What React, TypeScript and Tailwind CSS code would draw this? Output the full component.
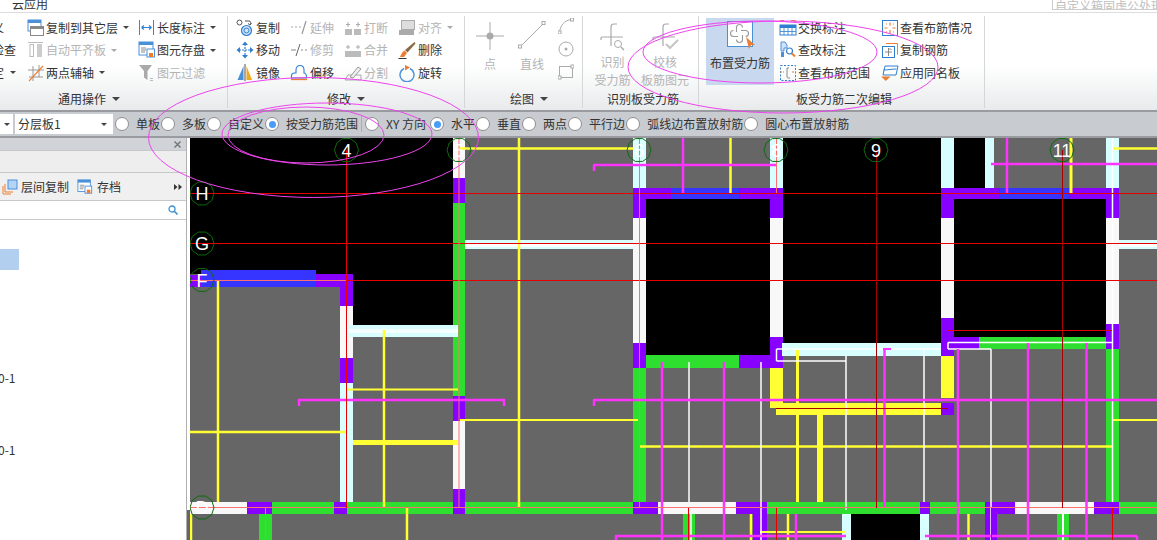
import React from 'react';

const GREEN = '#2fdf2f';
const PURPLE = '#8800ff';
const BLUE = '#3535ff';
const WHITE = '#f8f8f8';
const CYAN = '#d8ffff';
const YELLOW = '#ffff33';
const MAGENTA = '#ff33ff';
const RED = '#e80000';
const DARKRED = '#a80000';
const SALMON = '#ff7070';

type R = [number, number, number, number, string];
type L = [number, number, number, number, string, number];

const fills: R[] = [
  // black openings
  [190, 138, 453, 274, '#000'], [353, 274, 453, 325, '#000'],
  [645, 199, 770, 355, '#000'], [782, 138, 941, 343, '#000'],
  [954, 138, 985, 188, '#000'], [954, 199, 1106, 337, '#000'],
  [851, 514, 920, 540, '#000'],
  // wall 4
  [340, 274, 353, 306, PURPLE], [340, 306, 353, 358, WHITE], [340, 358, 353, 383, PURPLE], [340, 383, 353, 502, CYAN],
  // wall 5
  [453, 138, 465, 178, WHITE], [453, 178, 465, 203, PURPLE], [453, 203, 465, 396, GREEN],
  [453, 396, 465, 421, PURPLE], [453, 421, 465, 489, WHITE], [453, 489, 465, 514, PURPLE],
  // wall 6
  [633, 138, 646, 188, CYAN], [633, 188, 646, 218, PURPLE], [633, 218, 646, 343, WHITE], [633, 343, 646, 368, PURPLE], [633, 368, 646, 502, GREEN],
  // wall 8
  [770, 138, 783, 188, CYAN], [770, 188, 783, 218, PURPLE], [770, 218, 783, 337, WHITE], [770, 337, 783, 368, PURPLE],
  [770, 368, 783, 398, YELLOW], [770, 398, 783, 408, YELLOW],
  // wall 10
  [941, 138, 954, 188, CYAN], [941, 188, 954, 218, PURPLE], [941, 218, 954, 318, WHITE], [941, 318, 954, 356, PURPLE],
  [941, 356, 954, 398, YELLOW], [941, 403, 954, 415, PURPLE],
  // wall 11 + 12
  [985, 138, 994, 188, CYAN],
  [1106, 138, 1119, 188, CYAN], [1106, 188, 1119, 218, PURPLE], [1106, 218, 1119, 324, WHITE], [1106, 324, 1119, 349, PURPLE], [1106, 349, 1119, 502, GREEN],
  // top beams
  [190, 275, 201, 287, PURPLE], [201, 270, 316, 287, BLUE], [316, 274, 353, 287, PURPLE],
  [633, 188, 671, 199, PURPLE], [671, 188, 739, 199, BLUE], [739, 188, 783, 199, PURPLE],
  [941, 188, 1000, 199, PURPLE], [1000, 188, 1069, 199, BLUE], [1069, 188, 1119, 199, PURPLE],
  // cross beams
  [465, 240, 633, 249, CYAN], [465, 244, 633, 247, '#ffffff'],
  [1119, 240, 1157, 249, CYAN], [1119, 244, 1157, 247, '#ffffff'],
  [348, 325, 458, 337, CYAN], [348, 329, 458, 333, '#f4ffff'],
  [782, 343, 941, 356, CYAN],
  [646, 355, 739, 368, GREEN], [739, 355, 770, 368, PURPLE],
  [941, 337, 979, 349, PURPLE], [979, 337, 1106, 349, GREEN],
  [776, 403, 941, 415, YELLOW],
  [817, 415, 823, 502, YELLOW],
  [353, 440, 458, 445, YELLOW],
  // bottom beam
  [190, 502, 247, 514, WHITE], [247, 502, 272, 514, PURPLE], [272, 502, 334, 514, GREEN], [334, 502, 347, 514, PURPLE],
  [347, 502, 453, 514, GREEN], [453, 502, 465, 514, PURPLE], [465, 502, 633, 514, GREEN],
  [633, 502, 658, 514, PURPLE], [658, 502, 736, 514, WHITE], [736, 502, 767, 514, PURPLE], [767, 502, 920, 514, GREEN],
  [920, 502, 930, 514, PURPLE], [930, 502, 985, 514, GREEN], [985, 502, 1015, 514, PURPLE], [1015, 502, 1094, 514, WHITE],
  [1094, 502, 1119, 514, PURPLE], [1119, 502, 1157, 514, GREEN],
  // lower walls
  [259, 514, 272, 540, GREEN], [683, 514, 695, 540, GREEN], [753, 514, 767, 540, PURPLE],
  [842, 514, 851, 540, CYAN], [920, 514, 929, 540, CYAN], [985, 514, 997, 540, PURPLE], [997, 514, 1000, 540, '#666666'],
  [1057, 514, 1069, 540, GREEN],
];

const lines: L[] = [
  // yellow bars
  [218, 281, 218, 502, YELLOW, 2.5], [190, 432, 346, 432, YELLOW, 2.5], [384, 330, 384, 508, YELLOW, 2.5],
  [348, 389.5, 458, 389.5, YELLOW, 2], [519, 138, 519, 508, YELLOW, 2.5], [460, 148.5, 633, 148.5, YELLOW, 2.5],
  [460, 420, 638, 420, YELLOW, 2], [1113, 420, 1157, 420, YELLOW, 2], [1113, 148.5, 1157, 148.5, YELLOW, 2.5],
  [639, 446.5, 1112, 446.5, YELLOW, 2.5], [797.5, 350, 797.5, 502, YELLOW, 3], [730.5, 138, 730.5, 193, YELLOW, 2.5],
  [1071, 138, 1071, 193, YELLOW, 3], [191, 514, 191, 540, YELLOW, 2.5], [407, 508, 407, 540, YELLOW, 2.5],
  [751, 514, 751, 540, YELLOW, 2.5], [788, 514, 788, 540, YELLOW, 2.5], [968.5, 514, 968.5, 540, YELLOW, 2.5],
  [760, 532, 846, 532, YELLOW, 2],
  // white bars
  [689, 362, 689, 502, '#ffffff', 1.5], [761, 362, 761, 540, '#ffffff', 1.5], [846, 355, 846, 510, '#ffffff', 1.5],
  [924, 350, 924, 502, '#ffffff', 1.5], [991, 349, 991, 540, '#ffffff', 1.5], [1112.5, 138, 1112.5, 502, '#ffffff', 1.5],
  [776.5, 349, 941, 349, '#ffffff', 1.5], [776.5, 349, 776.5, 361, '#ffffff', 1.5], [776.5, 361, 846, 361, '#ffffff', 1.5],
  [948, 342.5, 1112, 342.5, '#ffffff', 1.5], [948, 342.5, 948, 349, '#ffffff', 1.5], [948, 349, 991, 349, '#ffffff', 1.5],
  [691, 514, 691, 540, '#ffffff', 1.5], [1063, 514, 1063, 540, '#ffffff', 2],
  // magenta bars
  [298, 400, 505, 400, MAGENTA, 2.5], [299, 400, 299, 406, MAGENTA, 2.5], [504, 400, 504, 406, MAGENTA, 2.5],
  [593, 400, 1157, 400, MAGENTA, 2.5], [594, 400, 594, 406, MAGENTA, 2.5],
  [593, 165, 776, 165, MAGENTA, 2.5], [594, 165, 594, 171, MAGENTA, 2.5], [683, 138, 683, 193, MAGENTA, 2.5],
  [991, 164, 1157, 164, MAGENTA, 2.5], [1007, 138, 1007, 193, MAGENTA, 2.5],
  [662, 362, 662, 540, MAGENTA, 2.5], [724, 362, 724, 540, MAGENTA, 2.5], [884.5, 349, 884.5, 508, MAGENTA, 2.5],
  [883, 349, 891, 349, MAGENTA, 2],
  [958, 349, 958, 540, MAGENTA, 2.5], [1028, 343, 1028, 540, MAGENTA, 2.5], [1086.5, 343, 1086.5, 540, MAGENTA, 2.5],
  [796, 514, 796, 540, MAGENTA, 2.5], [615, 536, 846, 536, MAGENTA, 2.5], [616, 536, 616, 540, MAGENTA, 2.5],
  [925, 536, 1137, 536, MAGENTA, 2.5], [1137, 536, 1137, 540, MAGENTA, 2.5],
  // axes
  [190, 193.5, 1157, 193.5, RED, 1], [190, 243.5, 1157, 243.5, RED, 1], [190, 280.5, 1157, 280.5, RED, 1],
  [190, 280.5, 346, 280.5, SALMON, 1], [190, 507.5, 1157, 507.5, SALMON, 1],
  [346.5, 150, 346.5, 508, RED, 1], [459, 138, 459, 508, SALMON, 1], [639.5, 138, 639.5, 508, SALMON, 1],
  [776.5, 138, 776.5, 193, SALMON, 1], [876.5, 150, 876.5, 508, DARKRED, 1], [1062.5, 150, 1062.5, 508, DARKRED, 1],
  [265.5, 508, 265.5, 540, SALMON, 1], [688.5, 508, 688.5, 540, RED, 1], [776.5, 508, 776.5, 540, RED, 1],
  [991.5, 508, 991.5, 540, RED, 1], [1112.5, 508, 1112.5, 540, RED, 1],
  [948, 330.5, 1112, 330.5, RED, 1], [776, 408.5, 948, 408.5, DARKRED, 1],
];

const axisMarks: [number, number, string][] = [
  [346.5, 150, '4'], [459, 150, '5'], [639, 150, '6'], [776, 150, '8'], [876, 150, '9'], [1062, 150, '11'],
  [202, 193.5, 'H'], [202, 243.5, 'G'], [202, 280, 'F'], [202, 507.5, 'D'],
];

function decagon(cx: number, cy: number, r: number) {
  const pts: string[] = [];
  for (let i = 0; i < 10; i++) {
    const a = (Math.PI * 2 * i) / 10;
    pts.push(`${cx + r * Math.cos(a)},${cy + r * Math.sin(a)}`);
  }
  return pts.join(' ');
}

function Canvas() {
  return (
    <svg width={967} height={402} viewBox="190 138 967 402" className="block bg-[#666666]">
      {fills.map((f, i) => (
        <rect key={i} x={f[0]} y={f[1]} width={f[2] - f[0]} height={f[3] - f[1]} fill={f[4]} shapeRendering="crispEdges" />
      ))}
      {lines.map((l, i) => (
        <line key={i} x1={l[0]} y1={l[1]} x2={l[2]} y2={l[3]} stroke={l[4]} strokeWidth={l[5]} />
      ))}
      {axisMarks.map(([x, y, t]) => (
        <g key={t}>
          <polygon points={decagon(x, y, 12)} fill="none" stroke="#0b6b0b" strokeWidth={1} />
          <text x={x} y={y + 6.5} textAnchor="middle" fontSize={18} fill="#ffffff" fontFamily="'Liberation Sans', sans-serif">{t}</text>
        </g>
      ))}
    </svg>
  );
}

const S = ({ children, className }: { children: React.ReactNode; className?: string }) => (
  <svg viewBox="0 0 18 18" className={className ?? 'w-[18px] h-[18px] shrink-0'} fill="none">{children}</svg>
);

const icons: Record<string, React.ReactNode> = {
  copyLayer: <><rect x="1" y="1" width="13" height="11" fill="#fff" stroke="#4a90d9" /><rect x="1" y="1" width="13" height="3" fill="#4a90d9" /><rect x="3.5" y="7.5" width="13" height="9" fill="#fff" stroke="#888" /><rect x="3.5" y="7.5" width="13" height="2.5" fill="#888" /></>,
  autoAlign: <><rect x="3" y="3.5" width="3.5" height="12" stroke="#bbb" /><rect x="10" y="3" width="5" height="13" fill="#ccc" /><path d="M1 1.5h15" stroke="#bbb" /></>,
  twoPoint: <><path d="M6 2v15M12 1v12M1 6h16M2 13h14" stroke="#999" /><path d="M2 17L16 2" stroke="#ed7d31" strokeWidth="1.1" /></>,
  lengthDim: <><path d="M1.5 1v15M15.5 1v15" stroke="#777" /><path d="M3.5 8.5h10M3.5 8.5l2.5-2M3.5 8.5l2.5 2M13.5 8.5l-2.5-2M13.5 8.5l-2.5 2" stroke="#2f7fd0" strokeWidth="1.1" /></>,
  save: <><rect x="1" y="1" width="14" height="13" fill="#fff" stroke="#4a90d9" /><rect x="1" y="1" width="14" height="3" fill="#4a90d9" /><path d="M3 7h5M3 9h5M3 11h4" stroke="#888" /><rect x="9" y="8" width="7.5" height="8" fill="#fff" stroke="#4a90d9" /><rect x="11" y="12" width="4" height="4" fill="#ed7d31" /></>,
  filter: <><path d="M1 1h13L9.5 7v9L6 13.5V7z" fill="#aaa" /><path d="M12 14.5h3M12 16.5h3" stroke="#bbb" /></>,
  copy: <><circle cx="3.5" cy="3.5" r="2.5" stroke="#555" /><circle cx="10.5" cy="11.5" r="5" fill="#cfe2f7" stroke="#2f7fd0" strokeWidth="1.2" /><circle cx="10.5" cy="11.5" r="2.5" stroke="#2f7fd0" /><path d="M9 2h4c2 0 2 2 1 4M14 6l-2-1.5M14 6l1.5-2" stroke="#555" /></>,
  move: <><path d="M9 3v12M3 9h12" stroke="#2f7fd0" strokeWidth="1.2" strokeDasharray="2 1" /><path d="M9 0.5l3 3.5H6zM9 17.5l3-3.5H6zM0.5 9L4 6v6zM17.5 9L14 6v6z" fill="#2f7fd0" /></>,
  mirror: <><path d="M7.5 2v14H1.5z" fill="#4a90d9" /><path d="M10.5 2v14h5.5z" fill="#f0a81e" /><path d="M9 0v17" stroke="#555" /></>,
  extend: <><path d="M1 8h2M5 8h2M9 8h2" stroke="#aaa" /><path d="M12 15l4-13" stroke="#999" strokeWidth="1.2" /></>,
  trim: <><path d="M1 9h5M11 9h2M15 9h2" stroke="#888" /><path d="M6 15l4-12" stroke="#666" /></>,
  offset: <><path d="M1.5 14v-2c0-2 1-3 3-3h1.5V6c0-3 2-4.5 4-4.5s4 1.5 4 4.5v3c2 0 2.5 2 2.5 5z" fill="#fff" stroke="#2f7fd0" strokeWidth="1.1" /><path d="M1 15.5h16" stroke="#ed7d31" strokeWidth="1.3" /></>,
  breakIcon: <><rect x="1" y="10" width="7" height="6" fill="#bbb" /><rect x="10" y="10" width="7" height="6" fill="#bbb" /><path d="M4 3v5M14 3v5M2 5.5h4M12 5.5h4" stroke="#aaa" /></>,
  merge: <><rect x="1" y="10" width="16" height="6" fill="#bbb" /><path d="M4 4v4M14 4v4M2 6h4M12 6h4" stroke="#aaa" /></>,
  split: <><path d="M1 16l3-5h13v5z" stroke="#aaa" /><path d="M6 13l8-10 3 2-8 9z" fill="#eee" stroke="#999" /></>,
  alignIcon: <><rect x="3.5" y="1.5" width="13" height="9" fill="#ddd" stroke="#aaa" /><rect x="1" y="11" width="15" height="5" fill="#aaa" /></>,
  del: <><path d="M16.5 1l1 1.5-8 9-2.5-2.5z" fill="#8a6a45" /><path d="M6.5 9.5l2.5 2.5-3 4H2c1-2 2-5 4.5-6.5z" fill="#ed7d31" /><path d="M0.5 17.5h8" stroke="#333" /></>,
  rotate: <><path d="M6 4.5A7 7 0 1 0 12 4.5" stroke="#4a90d9" strokeWidth="1.4" /><path d="M7 1v5.5l5-3z" fill="#ed7d31" /></>,
  swapLabel: <><path d="M2 3V1.5h3M12 1.5h4V3" stroke="#ed7d31" strokeWidth="1.2" /><rect x="1" y="6" width="16" height="10" fill="#fff" stroke="#2f7fd0" /><rect x="1" y="6" width="16" height="3" fill="#2f7fd0" /><path d="M1 12.5h16M5 9v7M9 9v7M13 9v7" stroke="#2f7fd0" strokeWidth="0.8" /></>,
  checkLabel: <><path d="M2 1h4l2 3v3H5v3H2z" fill="#cfe2f7" stroke="#4a90d9" /><path d="M2 11h3v5H2z" fill="#4a90d9" /><circle cx="10.5" cy="10" r="3" fill="#fff" stroke="#2f7fd0" strokeWidth="1.2" /><path d="M13 12.5l3 3" stroke="#ed7d31" strokeWidth="2" /></>,
  viewRange: <><rect x="1.5" y="1.5" width="15" height="15" stroke="#2f7fd0" strokeDasharray="2 1.5" /><path d="M1 8h4M13 8h4" stroke="#ed7d31" strokeDasharray="2 1" /><path d="M8 4v9c0 1 1 1 3 1M8 4h2" stroke="#888" /></>,
  viewInfo: <><rect x="1.5" y="1.5" width="15" height="15" stroke="#2f7fd0" /><path d="M9 3.5v3M9 11v3.5M3.5 9h3M11.5 9h3" stroke="#ed7d31" strokeWidth="1.2" /><path d="M5 5h1M12 5h1M5 13h1M12 13h1" stroke="#ed7d31" /></>,
  copyBar: <><rect x="1.5" y="5.5" width="12" height="11" fill="#fff" stroke="#2f7fd0" /><path d="M5 2.5h11.5v11" stroke="#ed7d31" /><path d="M7.5 7v8M4 11h7M10.5 9c0-1-1-1-3-1" stroke="#888" /></>,
  sameName: <><path d="M4 2h13l-2 9H2z" fill="#fff" stroke="#2f7fd0" /><path d="M2.5 6c5 0 8-1 13-1" stroke="#2f7fd0" /><path d="M0 12.5h9.5L4.8 17z" fill="#ed7d31" /></>,
};

function Caret({ muted, big }: { muted?: boolean; big?: boolean }) {
  return <span className={`inline-block w-0 h-0 ${big ? 'border-x-[4px] border-t-[4px]' : 'border-x-[3px] border-t-[3px]'} border-x-transparent ${muted ? 'border-t-[#aaaaaa]' : 'border-t-[#444444]'}`} />;
}

function Item({ icon, text, off, caret, iconGap = 2 }: { icon: string; text: string; off?: boolean; caret?: boolean; iconGap?: number }) {
  return (
    <div className={`flex items-center h-[23px] even:h-[22px] whitespace-nowrap ${off ? 'text-[#b4b4b4]' : 'text-[#333333]'}`}>
      <S>{icons[icon]}</S>
      <span style={{ marginLeft: iconGap }}>{text}</span>
      {caret && <span className="ml-[5px] flex items-center"><Caret muted={off} /></span>}
    </div>
  );
}

function Group({ width, label, caret, labelPad, children }: { width: number; label: string; caret?: boolean; labelPad: number; children: React.ReactNode }) {
  return (
    <div className="relative shrink-0 h-[92px] flex flex-col border-r border-[#d4d6d8]" style={{ width }}>
      <div className="h-[73px] flex">{children}</div>
      <div className="flex items-center gap-[6px] text-[#333333] h-[19px]" style={{ paddingLeft: labelPad }}>
        <span>{label}</span>
        {caret && <Caret big />}
      </div>
    </div>
  );
}

function Big({ icon, lines, off, width }: { icon: React.ReactNode; lines: string[]; off?: boolean; width: number }) {
  return (
    <div className={`flex flex-col items-center shrink-0 ${off ? 'text-[#b4b4b4]' : 'text-[#333333]'}`} style={{ width }}>
      <div className="h-[39px] pt-[5px] flex justify-center">{icon}</div>
      {lines.map((l) => <div key={l} className="h-[18px] leading-[18px] whitespace-nowrap">{l}</div>)}
    </div>
  );
}

function RebarIcon() {
  return (
    <svg width={30} height={30} viewBox="0 0 30 30" fill="none">
      <path d="M13 25V6q0-3 3-3h3M3 19v-2q0-1 1-1h21" stroke="#aaaaaa" strokeWidth="1.2" />
    </svg>
  );
}

function Ribbon() {
  return (
    <div className="h-[97px] flex pt-[3px] bg-gradient-to-b from-white from-55% to-[#e8eaeb] text-[12px]">
      <Group width={228} label="通用操作" caret labelPad={58}>
        <div className="w-[27px] shrink-0 flex flex-col items-end pr-[11px] text-[#333333] whitespace-nowrap overflow-hidden">
          <div className="h-[23px] flex items-center mr-[12px]">义</div>
          <div className="h-[22px] flex items-center">检查</div>
          <div className="h-[23px] flex items-center">定<span className="ml-[6px] flex"><Caret /></span></div>
        </div>
        <div className="w-[111px] shrink-0">
          <Item icon="copyLayer" text="复制到其它层" caret iconGap={1} />
          <Item icon="autoAlign" text="自动平齐板" off caret iconGap={1} />
          <Item icon="twoPoint" text="两点辅轴" caret iconGap={1} />
        </div>
        <div className="w-[88px] shrink-0">
          <Item icon="lengthDim" text="长度标注" caret iconGap={1} />
          <Item icon="save" text="图元存盘" caret iconGap={1} />
          <Item icon="filter" text="图元过滤" off iconGap={1} />
        </div>
      </Group>
      <Group width={237} label="修改" caret labelPad={99}>
        <div className="w-[62px] pl-[8px] shrink-0">
          <Item icon="copy" text="复制" />
          <Item icon="move" text="移动" />
          <Item icon="mirror" text="镜像" />
        </div>
        <div className="w-[54px] shrink-0">
          <Item icon="extend" text="延伸" off />
          <Item icon="trim" text="修剪" off />
          <Item icon="offset" text="偏移" />
        </div>
        <div className="w-[54px] shrink-0">
          <Item icon="breakIcon" text="打断" off />
          <Item icon="merge" text="合并" off />
          <Item icon="split" text="分割" off />
        </div>
        <div className="shrink-0">
          <Item icon="alignIcon" text="对齐" off caret />
          <Item icon="del" text="删除" />
          <Item icon="rotate" text="旋转" />
        </div>
      </Group>
      <Group width={118} label="绘图" caret labelPad={45}>
        <Big width={50} off lines={['点']} icon={
          <svg width={30} height={30} viewBox="0 0 30 30" fill="none"><path d="M1 15h28M15 1v28" stroke="#aaa" /><circle cx="15" cy="15" r="3.5" fill="#aaa" /></svg>
        } />
        <Big width={34} off lines={['直线']} icon={
          <svg width={28} height={28} viewBox="0 0 28 28" fill="none"><path d="M2 26L26 2" stroke="#aaa" /><rect x="0.5" y="24" width="3" height="3" stroke="#aaa" fill="#fff" /><rect x="24" y="0.5" width="3" height="3" stroke="#aaa" fill="#fff" /></svg>
        } />
        <div className="ml-[9px] flex flex-col gap-[7px] pt-[2px]">
          <svg width={16} height={16} viewBox="0 0 16 16" fill="none"><path d="M1.5 15C2 8 6 2 14 1.5" stroke="#aaa" /><rect x="0" y="13" width="3" height="3" stroke="#aaa" fill="#fff" /><rect x="12.5" y="0" width="3" height="3" stroke="#aaa" fill="#fff" /></svg>
          <svg width={16} height={16} viewBox="0 0 16 16" fill="none"><circle cx="8" cy="8" r="7" stroke="#aaa" /><circle cx="8" cy="8" r="1.5" fill="#aaa" /></svg>
          <svg width={16} height={16} viewBox="0 0 16 16" fill="none"><rect x="1.5" y="2.5" width="13" height="11" stroke="#aaa" /><rect x="0" y="12" width="3" height="3" fill="#fff" stroke="#aaa" /><rect x="13" y="1" width="3" height="3" fill="#fff" stroke="#aaa" /></svg>
        </div>
      </Group>
      <Group width={116} label="识别板受力筋" labelPad={24}>
        <div className="w-[6px] shrink-0" />
        <Big width={47} off lines={['识别', '受力筋']} icon={
          <span className="relative block w-[30px] h-[30px]"><RebarIcon /><svg className="absolute left-[15px] top-[18px]" width={12} height={12} viewBox="0 0 12 12" fill="none"><circle cx="5" cy="5" r="3.5" stroke="#aaa" /><path d="M8 8l3 3" stroke="#aaa" strokeWidth="1.5" /></svg></span>
        } />
        <Big width={58} off lines={['校核', '板筋图元']} icon={
          <span className="relative block w-[30px] h-[30px]"><RebarIcon /><svg className="absolute left-[15px] top-[18px]" width={14} height={10} viewBox="0 0 14 10" fill="none"><path d="M1 5l4 4 8-8" stroke="#c4c4c4" strokeWidth="2" /></svg></span>
        } />
      </Group>
      <Group width={286} label="板受力筋二次编辑" labelPad={97}>
        <div className="ml-[7px] mt-[2px] w-[68px] h-[67px] bg-[#c8d8ee] shrink-0 flex flex-col items-center text-[#333333]">
          <span className="relative mt-[3px] block w-[26px] h-[26px] bg-white border-[1.5px] border-[#4a90d9]">
            <svg className="absolute inset-0" width={23} height={23} viewBox="0 0 23 23" fill="none">
              <path d="M8.5 10V5.5a3 3 0 0 1 6 0M13 8.5h4.5a3 3 0 0 1 0 6M14.5 13v4.5a3 3 0 0 1-6 0M10 14.5H5.5a3 3 0 0 1 0-6" stroke="#999999" strokeWidth="1.1" />
            </svg>
            <svg className="absolute -right-[3px] -bottom-[3px]" width={9} height={12} viewBox="0 0 9 12"><path d="M0 0l9 8H5l-2 4z" fill="#ed7d31" /></svg>
          </span>
          <span className="mt-[7px] whitespace-nowrap leading-[18px]">布置受力筋</span>
        </div>
        <div className="ml-[5px] w-[102px] shrink-0">
          <Item icon="swapLabel" text="交换标注" iconGap={1} />
          <Item icon="checkLabel" text="查改标注" iconGap={1} />
          <Item icon="viewRange" text="查看布筋范围" iconGap={1} />
        </div>
        <div className="shrink-0">
          <Item icon="viewInfo" text="查看布筋情况" iconGap={1} />
          <Item icon="copyBar" text="复制钢筋" iconGap={1} />
          <Item icon="sameName" text="应用同名板" iconGap={1} />
        </div>
      </Group>
    </div>
  );
}

function Radio({ label, checked, labelWidth }: { label: string; checked?: boolean; labelWidth?: number }) {
  return (
    <label className="flex items-center gap-[7px] whitespace-nowrap">
      <span className="w-[14px] h-[14px] rounded-full bg-white border border-[#8f8f8f] flex items-center justify-center">
        {checked && <span className="w-[7px] h-[7px] rounded-full bg-[#4a9cf6]" />}
      </span>
      <span style={{ minWidth: labelWidth }}>{label}</span>
    </label>
  );
}

function OptionBar() {
  return (
    <div className="h-[28px] bg-[#c8cbd0] border-t-2 border-b-2 border-[#999ba0] flex items-center text-[12px] text-[#333333]">
      <div className="w-[13px] h-[20px] bg-white flex items-center justify-center"><Caret /></div>
      <div className="ml-[2px] w-[98px] h-[20px] bg-white flex items-center justify-between pl-[3px] pr-[6px]">
        <span>分层板1</span>
        <Caret />
      </div>
      <div className="ml-[2px] flex items-center gap-[1px]">
        <Radio label="单板" />
        <Radio label="多板" />
        <Radio label="自定义" />
        <Radio label="按受力筋范围" checked />
        <span className="mx-[2px] w-px h-[16px] bg-[#aaadb2]" />
        <Radio label="XY 方向" labelWidth={43} />
        <Radio label="水平" checked />
        <Radio label="垂直" />
        <Radio label="两点" />
        <Radio label="平行边" />
        <Radio label="弧线边布置放射筋" />
        <Radio label="圆心布置放射筋" />
      </div>
    </div>
  );
}

function LeftPanel() {
  return (
    <div className="w-[187px] shrink-0 h-[402px] border-r border-[#b0b0b0] bg-white flex flex-col text-[12px] text-[#333333]">
      <div className="h-[12px] bg-[#d0d3d8] flex items-center justify-end pr-[5px]">
        <svg width={7} height={7} viewBox="0 0 7 7"><path d="M0.5 0.5l6 6M6.5 0.5l-6 6" stroke="#777777" strokeWidth="1.5" /></svg>
      </div>
      <div className="h-[23px] bg-[#eeeeee] border-t border-b border-[#c8c8c8]" />
      <div className="h-[28px] bg-[#f0f0f0] border-b border-[#c8c8c8] flex items-center">
        <svg width={16} height={16} viewBox="0 0 16 16" fill="none" className="ml-[2px]"><path d="M1 7v8h8M3 5v8h8" stroke="#ed7d31" /><rect x="6" y="1" width="9" height="9" fill="#b3d4f7" stroke="#4a90d9" /></svg>
        <span className="ml-[3px]">层间复制</span>
        <svg width={16} height={16} viewBox="0 0 18 18" fill="none" className="ml-[8px]">{icons.save}</svg>
        <span className="ml-[4px]">存档</span>
        <svg width={8} height={6} viewBox="0 0 8 6" className="ml-auto mr-[4px]"><path d="M0 0l3.5 3L0 6zM4.5 0L8 3 4.5 6z" fill="#333333" /></svg>
      </div>
      <div className="h-[19px] border-b border-[#c8c8c8] flex items-center justify-end pr-[8px]">
        <svg width={10} height={10} viewBox="0 0 10 10" fill="none"><circle cx="4" cy="4" r="3" stroke="#3f8fd0" strokeWidth="1.3" /><path d="M6.5 6.5L9.5 9.5" stroke="#3f8fd0" strokeWidth="1.6" /></svg>
      </div>
      <div className="flex-1 pt-[29px] overflow-hidden">
        <div className="w-[19px] h-[21px] bg-[#b3cff0]" />
        <div className="mt-[99px] h-[18px] leading-[18px] -ml-[2px]">0-1</div>
        <div className="mt-[54px] h-[18px] leading-[18px] -ml-[2px]">0-1</div>
      </div>
    </div>
  );
}

export default function App() {
  return (
    <div className="relative w-[1157px] h-[540px] overflow-hidden bg-white font-['Noto_Sans_CJK_SC','Liberation_Sans',sans-serif]">
      <div className="h-[13px] border-b border-[#dddddd] flex items-start justify-between overflow-hidden text-[12px]">
        <span className="ml-[12px] -mt-[5px] leading-[18px] text-[#333333]">云应用</span>
        <div className="w-[105px] h-[11px] -mt-[1px] border border-[#cccccc] overflow-hidden whitespace-nowrap text-[#c0c0c0] leading-[12px] pl-[2px]">自定义箱固虑公处理么</div>
      </div>
      <Ribbon />
      <OptionBar />
      <div className="flex">
        <LeftPanel />
        <div className="w-[3px] h-[402px] flex flex-col">
          <div className="h-[372px] bg-white" />
          <div className="flex-1 bg-[#666666]" />
        </div>
        <Canvas />
      </div>
      <svg className="absolute inset-0 pointer-events-none" width={1157} height={540} fill="none" stroke="#ee44ee" strokeWidth={1}>
        <ellipse cx={313.5} cy={137.5} rx={165} ry={60} />
        <ellipse cx={327} cy={134} rx={105} ry={31} />
        <ellipse cx={306} cy={135} rx={78} ry={28} />
        <ellipse cx={783} cy={67} rx={155} ry={46} />
        <ellipse cx={760} cy={52} rx={117} ry={31} />
      </svg>
    </div>
  );
}
